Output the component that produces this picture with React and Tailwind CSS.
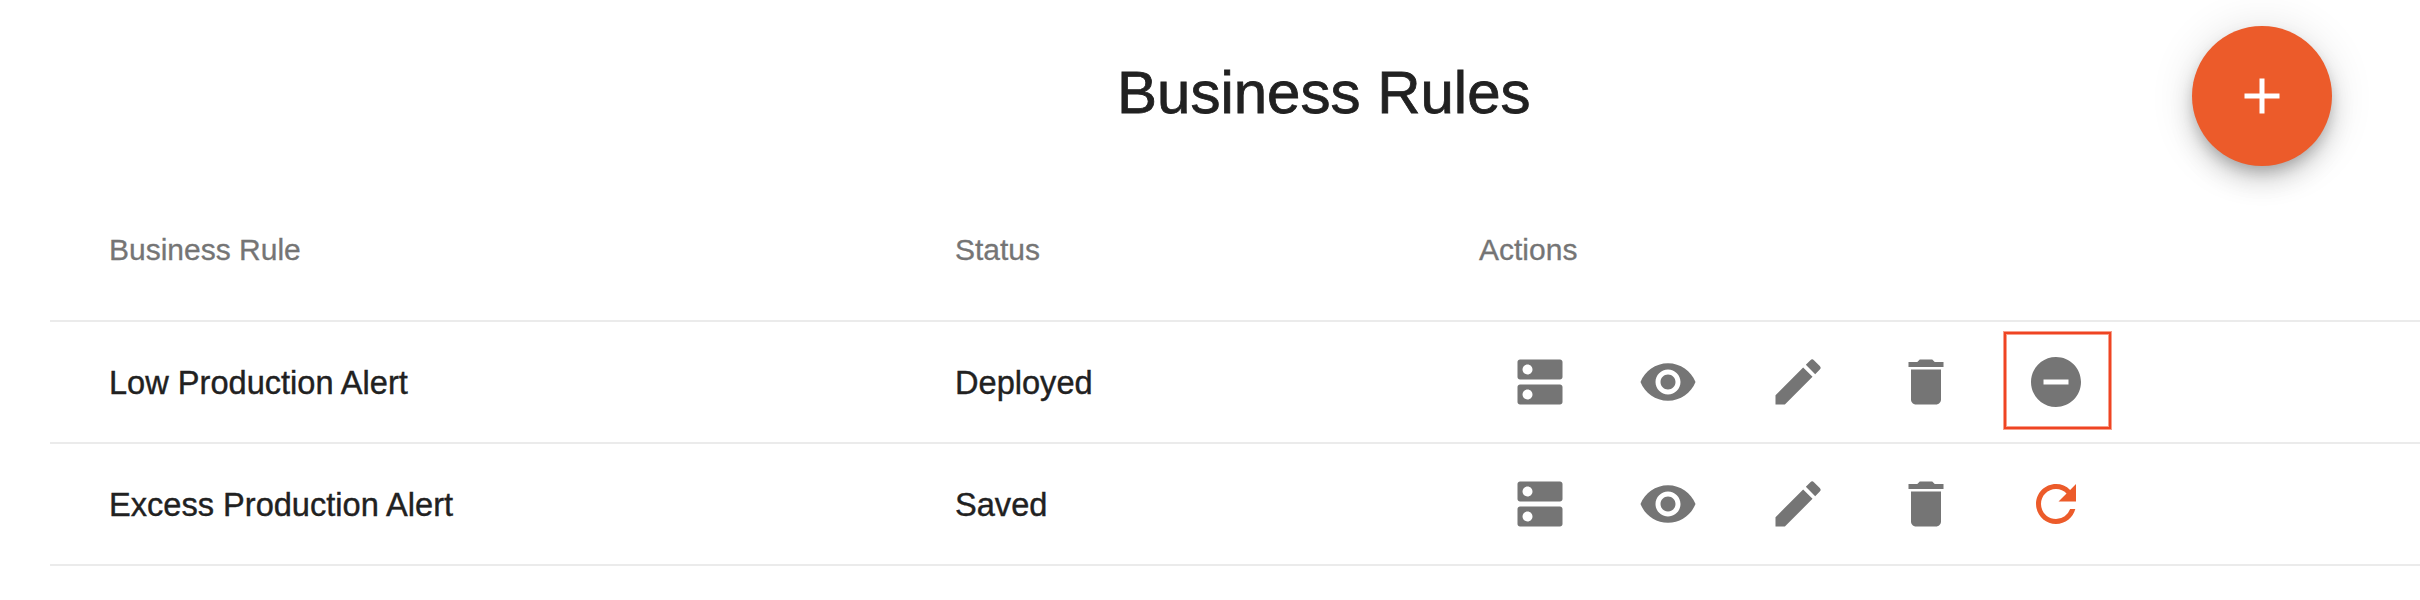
import React from "react";
import { MdDns, MdVisibility, MdEdit, MdDelete, MdRemoveCircle, MdRefresh, MdAdd } from "react-icons/md";

const rows = [
  { name: "Low Production Alert", status: "Deployed", deployed: true },
  { name: "Excess Production Alert", status: "Saved", deployed: false },
];

export default function App() {
  return (
    <main className="h-[600px] w-[2420px] overflow-hidden bg-white font-['Liberation_Sans',Arial,sans-serif] text-[#212121]">
      <header className="flex h-[182px] items-start">
        <h1 className="w-[2192px] pt-[53px] pl-[1117px] text-[60px] leading-[80px] [-webkit-text-stroke:0.8px_#212121]">
          Business Rules
        </h1>
        <button className="mt-[26px] flex size-[140px] items-center justify-center rounded-full bg-[#ec5b2a] text-white shadow-[0_7.5px_12.5px_-2.5px_rgba(0,0,0,0.2),0_15px_25px_rgba(0,0,0,0.14),0_2.5px_45px_rgba(0,0,0,0.12)]">
          <MdAdd className="size-[60px]" />
        </button>
      </header>
      <section className="ml-[50px]">
        <div className="flex h-[140px] items-center border-b-2 border-[#ebebeb] pb-[4px] pl-[59px] text-[30px] text-[#757575] [-webkit-text-stroke:0.3px_#757575]">
          <div className="w-[846px]">Business Rule</div>
          <div className="w-[524px]">Status</div>
          <div>Actions</div>
        </div>
        {rows.map((r) => (
          <div
            key={r.name}
            className="flex h-[122px] items-center border-b-2 border-[#ebebeb] pl-[59px] text-[32.6px] [-webkit-text-stroke:0.4px_#212121]"
          >
            <div className="w-[846px] pt-[2px]">{r.name}</div>
            <div className="w-[524px] pt-[2px]">{r.status}</div>
            <div className="ml-[31px] flex items-center text-[#757575]">
              <MdDns className="size-[60px]" />
              <MdVisibility className="ml-[68px] size-[60px]" />
              <MdEdit className="ml-[70px] size-[60px]" />
              <MdDelete className="ml-[68px] size-[60px]" />
              <div className="relative ml-[70px]">
                {r.deployed ? (
                  <>
                    <MdRemoveCircle className="size-[60px]" />
                    <div className="absolute top-[-20px] left-[-22px] h-[97px] w-[107px] border-2 border-[#ef4423] shadow-[0_0_0_1px_#f7a08c,inset_0_0_0_1px_#f7a08c]" />
                  </>
                ) : (
                  <MdRefresh className="size-[60px] text-[#ec5b2a]" />
                )}
              </div>
            </div>
          </div>
        ))}
      </section>
    </main>
  );
}
